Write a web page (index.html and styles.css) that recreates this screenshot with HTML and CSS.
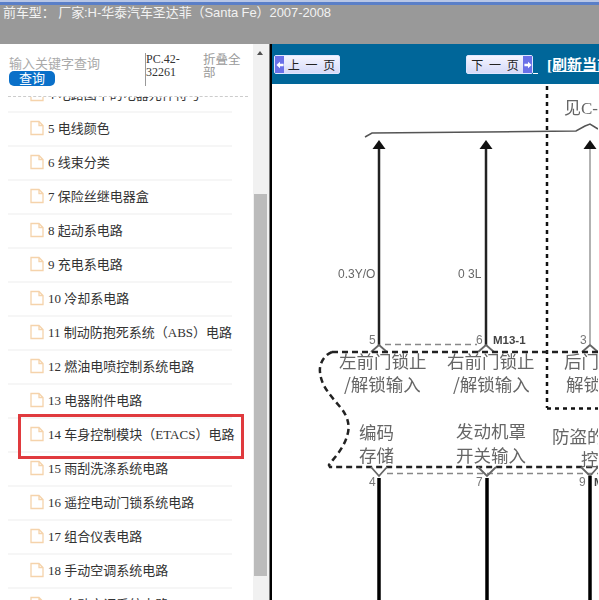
FILE: index.html
```html
<!DOCTYPE html>
<html lang="en">
<head>
    <meta charset="UTF-8">
    <meta name="viewport" content="width=device-width, initial-scale=1.0">
    <title>维修手册</title>
    <link rel="stylesheet" href="styles.css">
</head>
<body>
    <div class="topbar">前车型： 厂家:H-华泰汽车圣达菲（Santa Fe）2007-2008</div>

    <div class="main">
        <div class="sidebar">
            <div class="search">
                <div class="search-left">
                    <div class="placeholder">输入关键字查询</div>
                    <div class="search-btn">查询</div>
                </div>
                <div class="code">PC.42-32261</div>
                <div class="collapse">折叠全部</div>
            </div>
            <div class="tree">
                <div class="tree-inner">
                    <div class="row"><svg class="file" viewBox="0 0 14 16"><path d="M1 1.5h8l4 4v9h-12z M9 1.5v4h4"/></svg>4 电路图中的电器元件符号</div>
                    <div class="row"><svg class="file" viewBox="0 0 14 16"><path d="M1 1.5h8l4 4v9h-12z M9 1.5v4h4"/></svg>5 电线颜色</div>
                    <div class="row"><svg class="file" viewBox="0 0 14 16"><path d="M1 1.5h8l4 4v9h-12z M9 1.5v4h4"/></svg>6 线束分类</div>
                    <div class="row"><svg class="file" viewBox="0 0 14 16"><path d="M1 1.5h8l4 4v9h-12z M9 1.5v4h4"/></svg>7 保险丝继电器盒</div>
                    <div class="row"><svg class="file" viewBox="0 0 14 16"><path d="M1 1.5h8l4 4v9h-12z M9 1.5v4h4"/></svg>8 起动系电路</div>
                    <div class="row"><svg class="file" viewBox="0 0 14 16"><path d="M1 1.5h8l4 4v9h-12z M9 1.5v4h4"/></svg>9 充电系电路</div>
                    <div class="row"><svg class="file" viewBox="0 0 14 16"><path d="M1 1.5h8l4 4v9h-12z M9 1.5v4h4"/></svg>10 冷却系电路</div>
                    <div class="row"><svg class="file" viewBox="0 0 14 16"><path d="M1 1.5h8l4 4v9h-12z M9 1.5v4h4"/></svg>11 制动防抱死系统（ABS）电路</div>
                    <div class="row"><svg class="file" viewBox="0 0 14 16"><path d="M1 1.5h8l4 4v9h-12z M9 1.5v4h4"/></svg>12 燃油电喷控制系统电路</div>
                    <div class="row"><svg class="file" viewBox="0 0 14 16"><path d="M1 1.5h8l4 4v9h-12z M9 1.5v4h4"/></svg>13 电器附件电路</div>
                    <div class="row row-marked"><svg class="file" viewBox="0 0 14 16"><path d="M1 1.5h8l4 4v9h-12z M9 1.5v4h4"/></svg>14 车身控制模块（ETACS）电路<div class="mark"></div></div>
                    <div class="row"><svg class="file" viewBox="0 0 14 16"><path d="M1 1.5h8l4 4v9h-12z M9 1.5v4h4"/></svg>15 雨刮洗涤系统电路</div>
                    <div class="row"><svg class="file" viewBox="0 0 14 16"><path d="M1 1.5h8l4 4v9h-12z M9 1.5v4h4"/></svg>16 遥控电动门锁系统电路</div>
                    <div class="row"><svg class="file" viewBox="0 0 14 16"><path d="M1 1.5h8l4 4v9h-12z M9 1.5v4h4"/></svg>17 组合仪表电路</div>
                    <div class="row"><svg class="file" viewBox="0 0 14 16"><path d="M1 1.5h8l4 4v9h-12z M9 1.5v4h4"/></svg>18 手动空调系统电路</div>
                    <div class="row"><svg class="file" viewBox="0 0 14 16"><path d="M1 1.5h8l4 4v9h-12z M9 1.5v4h4"/></svg>19 自动空调系统电路</div>
                </div>
            </div>
        </div>

        <div class="scrollbar">
            <div class="arrow-up"></div>
            <div class="thumb"></div>
        </div>

        <div class="content">
            <div class="toolbar">
                <div class="page-btn page-prev"><span class="arrow-box">
                    <svg viewBox="0 0 10 10" class="arrow"><path d="M0.5 5l4.5-4v2.500h4.500v3h-4.500v2.500z"/></svg></span><span class="page-label">上 一 页</span></div>
                <div class="page-btn page-next"><span class="page-label">下 一 页</span><span class="arrow-box">
                    <svg viewBox="0 0 10 10" class="arrow"><path d="M9.500 5l-4.500-4v2.500h-4.500v3h4.500v2.500z"/></svg></span></div>
                <a class="stub">&nbsp;</a>
                <a class="refresh">[刷新当前页]</a>
            </div>
            <svg class="diagram" viewBox="273 84 326 516">
                <g class="dash-v"><path d="M548 86V408"/><path d="M548 408.500H600"/></g>
                <path class="bus" d="M366 137L373 133L577 131L586 126L591 124L599 129"/>

                <path class="wire" d="M380 148V346"/>
                <path class="wire" d="M487 148V346"/>
                <path class="wire-thin" d="M591 148V344"/>
                <path class="head" d="M380 140l-6.500 9h13z"/>
                <path class="head" d="M487 140l-6.500 9h13z"/>
                <path class="head" d="M591 140l-6.500 9h13z"/>

                <path class="fork" d="M372 352L380 345L388 352"/>
                <path class="fork" d="M479 352L487 345L495 352"/>
                <path class="fork" d="M583 352L591 345L599 352"/>
                <path class="dash-thin" d="M386 344.500H478"/>
                <path class="dash" d="M333 352H599"/>
                <path class="dash" d="M333 352C325 355 320 364 321 372C322 386 332 396 342 408C350 418 351 428 348 436C345 448 335 458 330 465L331 467H599"/>
                <path class="dash-thin" d="M388 473.500H599"/>

                <path class="fork" d="M372 467L380 476L388 467"/>
                <path class="fork" d="M479 467L488 476L497 467"/>
                <path class="fork" d="M582 467L591 476L599 467"/>
                <path class="wire-thick" d="M380 478V600"/>
                <path class="wire-thick" d="M488 478V600"/>
                <path class="wire-thick" d="M591 476V600"/>

                <text class="gauge" x="339" y="278">0.3Y/O</text>
                <text class="gauge" x="459" y="278">0 3L</text>
                <text class="pin" x="370" y="344">5</text>
                <text class="pin" x="477" y="344">6</text>
                <text class="conn" x="494" y="344">M13-1</text>
                <text class="pin" x="581" y="344">3</text>
                <text class="pin" x="370" y="486">4</text>
                <text class="pin" x="477" y="486">7</text>
                <text class="pin" x="580" y="486">9</text>
                <text class="conn" x="595" y="486">M</text>

                <text class="note" x="565" y="114">见C-</text>
                <text class="lab" x="340" y="368">左前门锁止</text>
                <text class="lab" x="345" y="391">/解锁输入</text>
                <text class="lab" x="448" y="368">右前门锁止</text>
                <text class="lab" x="454" y="391">/解锁输入</text>
                <text class="lab" x="565" y="368">后门</text>
                <text class="lab" x="567" y="391">解锁</text>
                <text class="lab" x="360" y="439">编码</text>
                <text class="lab" x="360" y="462">存储</text>
                <text class="lab" x="457" y="438">发动机罩</text>
                <text class="lab" x="457" y="462">开关输入</text>
                <text class="lab" x="553" y="443">防盗的</text>
                <text class="lab" x="582" y="466">控</text>
            </svg>
        </div>
    </div>
</body>
</html>
```

FILE: styles.css
```css
html, body {
    margin: 0;
    padding: 0;
    height: 100%;
    overflow: hidden;
}
body {
    font-family: "Liberation Sans", "Noto Sans CJK SC", sans-serif;
    background: white;
    display: flex;
    flex-direction: column;
}
.topbar {
    height: 42px;
    padding-left: 3px;
    border-top: 2px solid #b7c6e6;
    box-shadow: inset 0 3px 0 #5a7fc8;
    background: #999;
    color: #f2f2f2;
    font-size: 13px;
    line-height: 22px;
    letter-spacing: -0.08px;
    white-space: nowrap;
    flex: none;
}
.main {
    flex: 1;
    display: flex;
    min-height: 0;
}

/* left tree */
.sidebar {
    width: 253px;
    flex: none;
    display: flex;
    flex-direction: column;
}
.search {
    height: 53px;
    margin: 0 5px 0 8px;
    box-sizing: border-box;
    border-bottom: 1px dashed #ccc;
    display: flex;
    flex: none;
}
.search-left {
    width: 137px;
    padding: 13px 0 0 1px;
    box-sizing: border-box;
}
.placeholder {
    color: #aaa;
    font-size: 13px;
    line-height: 14px;
}
.search-btn {
    width: 46px;
    height: 15px;
    background: #0a70c9;
    border-radius: 5px;
    color: white;
    font-size: 13px;
    line-height: 15px;
    text-align: center;
}
.code {
    width: 58px;
    height: 33px;
    margin-top: 9px;
    box-sizing: border-box;
    border-left: 1px solid #999;
    font-family: "Liberation Serif", "Noto Sans CJK SC", serif;
    font-size: 12px;
    line-height: 13px;
    color: #333;
}
.collapse {
    width: 40px;
    margin-top: 10px;
    color: #999;
    font-size: 12.500px;
    line-height: 13px;
}
.tree {
    flex: 1;
    overflow: hidden;
    min-height: 0;
}
.tree-inner {
    margin-top: -18px;
}
.row {
    position: relative;
    height: 34px;
    margin-left: 8px;
    width: 224px;
    box-sizing: border-box;
    border-bottom: 2px solid #f6f6f6;
    padding: 0 0 3px 22px;
    display: flex;
    align-items: center;
    white-space: nowrap;
    font-family: "Liberation Serif", "Noto Sans CJK SC", serif;
    font-size: 13px;
    color: #333;
}
.file {
    width: 14px;
    height: 16px;
    margin-right: 4px;
    flex: none;
}
.file path {
    fill: white;
    stroke: #f5d3ab;
    stroke-width: 1.300;
}
.mark {
    position: absolute;
    left: 10px;
    top: -5px;
    width: 226px;
    height: 45px;
    box-sizing: border-box;
    border: 3px solid #e03a3e;
}

/* fake scrollbar */
.scrollbar {
    width: 16px;
    flex: none;
    background: #f1f1f1;
}
.arrow-up {
    width: 0;
    height: 0;
    margin: 7px 0 0 4px;
    border-left: 3.500px solid transparent;
    border-right: 3.500px solid transparent;
    border-bottom: 4px solid #505050;
}
.thumb {
    width: 13px;
    height: 382px;
    margin: 139px 0 0 1px;
    background: #bbb;
}

/* right panel */
.content {
    flex: 1;
    min-width: 0;
    border-left: 1px solid #777;
    box-shadow: inset 2px 0 0 #000;
    padding-left: 2px;
    overflow: hidden;
    display: flex;
    flex-direction: column;
}
.toolbar {
    height: 40px;
    flex: none;
    background: #006699;
    display: flex;
    align-items: flex-start;
    padding: 11px 0 0 2px;
    box-sizing: border-box;
    white-space: nowrap;
}
.page-btn {
    width: 66px;
    height: 19px;
    flex: none;
    box-sizing: border-box;
    border: 1px solid #dfe6ff;
    border-radius: 2px;
    background: linear-gradient(#f4f5ff, #d6daf8);
    display: flex;
    align-items: stretch;
    font-family: "Noto Sans CJK SC", sans-serif;
    font-size: 12px;
    word-spacing: 3px;
    color: #222;
}
.page-next {
    margin-left: 126px;
    width: 67px;
}
.page-label {
    flex: 1;
    text-align: center;
    line-height: 17px;
}
.arrow-box {
    width: 9px;
    background: #6a70e8;
    display: flex;
    align-items: center;
    justify-content: center;
}
.arrow {
    width: 8px;
    height: 8px;
    fill: white;
}
.stub {
    width: 5px;
    height: 19px;
    flex: none;
    border-bottom: 1px solid white;
    box-sizing: border-box;
}
.refresh {
    margin-left: 9px;
    flex: none;
    color: white;
    font-family: "Liberation Serif", "Noto Sans CJK SC", serif;
    font-weight: bold;
    font-size: 15px;
    line-height: 21px;
    text-decoration: underline;
}

/* wiring diagram */
.diagram {
    display: block;
    width: 326px;
    height: 516px;
    flex: none;
    background: white;
    filter: blur(0.35px);
}
.diagram path {
    fill: none;
}
.bus {
    stroke: #555;
    stroke-width: 1.500;
}
.wire {
    stroke: #222;
    stroke-width: 2.500;
}
.wire-thin {
    stroke: #999;
    stroke-width: 1.500;
}
.wire-thick {
    stroke: #000;
    stroke-width: 3.500;
}
.diagram .head {
    fill: #111;
}
.fork {
    stroke: #666;
    stroke-width: 1.800;
}
.dash-v path {
    stroke: #111;
    stroke-width: 2.500;
    stroke-dasharray: 4 4;
}
.dash {
    stroke: #222;
    stroke-width: 2.500;
    stroke-dasharray: 6 4;
}
.dash-thin {
    stroke: #888;
    stroke-width: 1.500;
    stroke-dasharray: 6 4;
}
.gauge {
    font-family: "Liberation Sans", sans-serif;
    font-size: 12px;
    fill: #666;
}
.pin {
    font-family: "Liberation Sans", sans-serif;
    font-size: 12px;
    fill: #777;
}
.conn {
    font-family: "Liberation Sans", sans-serif;
    font-size: 11.500px;
    font-weight: bold;
    fill: #444;
}
.note {
    font-family: "Liberation Serif", "Noto Sans CJK SC", serif;
    font-size: 17px;
    fill: #666;
}
.lab {
    font-family: "Noto Sans CJK SC", sans-serif;
    font-size: 17.500px;
    fill: #666;
}
```
